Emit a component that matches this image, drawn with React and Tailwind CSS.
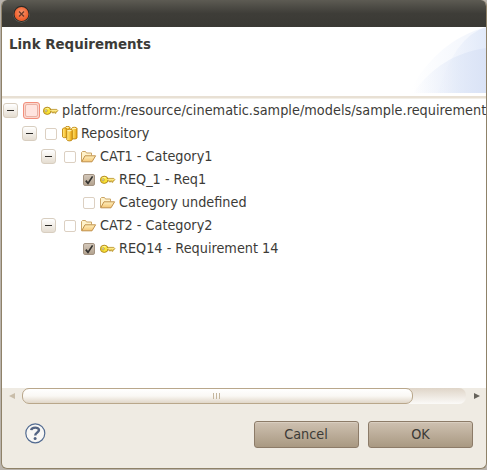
import React from "react";

function Key() {
  return (
    <svg width="16" height="12" viewBox="0 0 16 12" className="block shrink-0">
      <path d="M6.5 4.4H13.8L14.9 5.6L14 6.8H13V8.2H11.8V7H10.6V8H9.4V7H6.5Z" fill="#f9df6a" stroke="#b8912a" strokeWidth=".8" />
      <ellipse cx="4.2" cy="5.8" rx="3.8" ry="3.6" fill="#fae436" stroke="#b38a22" />
      <path d="M2 4.4Q3.7 2.9 6 3.9" fill="none" stroke="#fff8a8" />
      <circle cx="3" cy="5.9" r="1.1" fill="#fff" stroke="#8b6818" strokeWidth=".6" />
      <path d="M7 5.5H14" stroke="#fff0a0" strokeWidth=".6" />
    </svg>
  );
}

function Folder() {
  return (
    <svg width="16" height="14" viewBox="0 0 16 14" className="block shrink-0">
      <path d="M.5 11.5V2.5L1.5 1.5H4.5L5.5 3H10.5V5.5" fill="#fff2ca" stroke="#cba566" />
      <path d="M.7 11.8L4 5.8H14.6L11 11.8Z" fill="url(#folderFill)" stroke="#c0904a" strokeLinejoin="round" />
      <defs>
        <linearGradient id="folderFill" x2="0" y2="1">
          <stop stopColor="#fff0be" />
          <stop offset="1" stopColor="#f4c574" />
        </linearGradient>
      </defs>
    </svg>
  );
}

function Cylinders() {
  return (
    <svg width="16" height="16" viewBox="0 0 16 16" className="block shrink-0">
      <defs>
        <linearGradient id="gold">
          <stop stopColor="#ffe98a" />
          <stop offset=".45" stopColor="#fbd04a" />
          <stop offset="1" stopColor="#e39c10" />
        </linearGradient>
      </defs>
      <g fill="url(#gold)" stroke="#bd860f" strokeWidth=".9">
        <path d="M3.2 1.5V9H8V1.5C8 .1 3.2 .1 3.2 1.5Z" />
        <path d="M.5 3V10.8C.5 12 5 12 5 10.8V3C5 1.6 .5 1.6 .5 3Z" />
        <path d="M9.6 2.4V12C9.6 13.3 15 13.3 15 12V2.4C15 .9 9.6 .9 9.6 2.4Z" />
        <path d="M4.7 4.6V13.6C4.7 15.3 10.3 15.3 10.3 13.6V4.6C10.3 3 4.7 3 4.7 4.6Z" />
      </g>
      <g fill="#fff0ae">
        <ellipse cx="7.5" cy="4.6" rx="2.3" ry=".8" />
        <ellipse cx="12.3" cy="2.4" rx="2.1" ry=".7" />
        <ellipse cx="5.6" cy="1.5" rx="1.9" ry=".5" />
      </g>
    </svg>
  );
}

function Expander() {
  return (
    <div className="flex h-[15px] w-[15px] shrink-0 items-center justify-center rounded-[3px] border border-[#d8cec0] bg-gradient-to-b from-white to-[#e5ddd1]">
      <div className="h-px w-[7px] bg-[#2d2b28]" />
    </div>
  );
}

function Box({ checked, focus }) {
  if (focus)
    return (
      <div className="-mr-[2px] -ml-px flex h-[17px] w-[17px] shrink-0 items-center justify-center rounded-[3px] border border-[#f28f7c] bg-[#fcd6cd]">
        <div className="h-[13px] w-[13px] rounded-[2px] border border-[#e8b3a6] bg-[#ffe4df]" />
      </div>
    );
  return checked ? (
    <div className="ml-[2px] h-3 w-3 shrink-0 rounded-[2px] border border-[#a39382] bg-gradient-to-b from-[#d3c7b9] to-[#b3a390]">
      <svg width="12" height="12" viewBox="0 0 12 12" className="-mt-px -ml-px block">
        <path d="M2.8 6.6L5 9.4L9.6 2.4" fill="none" stroke="#33322f" strokeWidth="1.7" />
      </svg>
    </div>
  ) : (
    <div className="ml-[2px] h-3 w-3 shrink-0 rounded-[2px] border border-[#dcd0c2] bg-white" />
  );
}

const rows = [
  { pad: "pl-[1px] tracking-[0.03px]", icon: <Key />, text: "platform:/resource/cinematic.sample/models/sample.requirement", open: true, focus: true },
  { pad: "pl-[20px]", icon: <Cylinders />, text: "Repository", open: true },
  { pad: "pl-[39px]", icon: <Folder />, text: "CAT1 - Category1", open: true },
  { pad: "pl-[58px]", icon: <Key />, text: "REQ_1 - Req1", checked: true },
  { pad: "pl-[58px]", icon: <Folder />, text: "Category undefined" },
  { pad: "pl-[39px]", icon: <Folder />, text: "CAT2 - Category2", open: true },
  { pad: "pl-[58px]", icon: <Key />, text: "REQ14 - Requirement 14", checked: true },
];

function Button({ children, className }) {
  return (
    <button className={"h-[27px] rounded-[3px] border border-[#8c7b68] bg-gradient-to-b from-[#cec1b1] to-[#a99982] text-center leading-[25px] shadow-[inset_0_1px_0_#d9cec0] " + className}>
      {children}
    </button>
  );
}

export default function App() {
  return (
    <div className="h-[470px] w-[487px] overflow-hidden bg-[#b9b3ac] pl-px font-['DejaVu_Sans_Condensed','DejaVu_Sans',sans-serif] text-[14.3px] text-[#3c3b37] [font-stretch:condensed]">
      <div className="flex h-[469px] w-[486px] flex-col overflow-hidden rounded-[6px] border-x border-b border-[#8f8269] bg-[#efebe3]">
        <div className="flex h-[27px] shrink-0 items-center bg-gradient-to-b from-[#5d5b53] via-[#3e3d38] to-[#3a3934] pl-[11px]">
          <svg width="17" height="18" viewBox="0 0 17 18" className="mt-px block">
            <defs>
              <radialGradient id="closeFill" cy=".4">
                <stop stopColor="#fa9871" />
                <stop offset="1" stopColor="#ef602d" />
              </radialGradient>
            </defs>
            <circle cx="8.5" cy="9.2" r="8.3" fill="#77746b" />
            <circle cx="8.5" cy="8.8" r="8.1" fill="#2b2a27" />
            <circle cx="8.5" cy="9" r="7" fill="url(#closeFill)" />
            <path d="M6 6.5L11 11.5M11 6.5L6 11.5" stroke="#6d3b29" strokeWidth="1.4" />
          </svg>
        </div>
        <div className="flex h-[69px] shrink-0 justify-between bg-white pl-[7px]">
          <h1 className="mt-[10px] font-['DejaVu_Sans',sans-serif] text-[13.4px] leading-4 font-bold whitespace-nowrap [font-stretch:normal]">Link Requirements</h1>
          <svg width="74" height="66" viewBox="0 0 74 66" className="block">
            <defs>
              <linearGradient id="arc" gradientUnits="userSpaceOnUse" x1="0" x2="74" y1="0" y2="0">
                <stop stopColor="#fff" />
                <stop offset="1" stopColor="#f0f4fc" />
              </linearGradient>
              <linearGradient id="arcInner" gradientUnits="userSpaceOnUse" x1="0" x2="74" y1="0" y2="0">
                <stop stopColor="#e4ebf9" stopOpacity="0" />
                <stop offset="1" stopColor="#dae3f6" />
              </linearGradient>
              <linearGradient id="arcMid" gradientUnits="userSpaceOnUse" x1="32" x2="74" y1="0" y2="0">
                <stop stopColor="#e6edfa" stopOpacity="0.1" />
                <stop offset="1" stopColor="#e2eaf9" />
              </linearGradient>
            </defs>
            <path d="M-4 66C14 34 38 10 74 0V66Z" fill="url(#arc)" />
            <path d="M26 66Q42 10 74 0V66Z" fill="url(#arcMid)" />
            <path d="M1 66C20 40 42 26 74 21V66Z" fill="url(#arcInner)" />
          </svg>
        </div>
        <div className="h-[3px] shrink-0 border-b border-[#f3efe7] bg-[#e8e0d4]" />
        <div className="h-[289px] shrink-0 overflow-hidden bg-white">
          {rows.map((r) => (
            <div key={r.text} className={"flex h-[23px] items-center whitespace-nowrap " + r.pad}>
              {r.open ? <Expander /> : <div className="w-[15px] shrink-0" />}
              <div className="ml-[6px] flex w-[14px] shrink-0"><Box checked={r.checked} focus={r.focus} /></div>
              <div className="ml-[5px] flex shrink-0">{r.icon}</div>
              <span className="ml-[3px]">{r.text}</span>
            </div>
          ))}
        </div>
        <div className="flex h-4 shrink-0 items-center pl-[7px]">
          <svg width="6" height="6" className="block"><path d="M6 0V6L0 3Z" fill="#c9bda9" /></svg>
          <div className="ml-[7px] h-4 w-[444px] rounded-[7px] bg-gradient-to-b from-[#dfd5c8] to-[#fbfaf8]">
            <div className="flex h-4 w-[391px] items-center justify-center gap-[2px] rounded-[7px] border border-[#b9a78b] bg-gradient-to-b from-white via-[#faf8f4] to-[#e1d7c9] pr-[2px]">
              <i className="h-[6px] w-px bg-[#c4b69d]" />
              <i className="h-[6px] w-px bg-[#c4b69d]" />
              <i className="h-[6px] w-px bg-[#c4b69d]" />
            </div>
          </div>
          <svg width="6" height="6" className="ml-2 block"><path d="M0 0V6L6 3Z" fill="#66635b" /></svg>
        </div>
        <div className="flex pt-[17px] pl-[23px]">
          <svg width="21" height="21" viewBox="0 0 21 21" className="mt-[2px] block">
            <circle cx="10.3" cy="10.3" r="9.5" fill="#f8f7f5" stroke="#526b91" strokeWidth="1.2" />
            <path d="M6.2 7.2C6.6 3.8 14 3.7 14 7.1C14 9.6 10.2 9.3 10.2 12.5" fill="none" stroke="#536483" strokeWidth="2.4" />
            <circle cx="10.1" cy="15.5" r="1.5" fill="#536483" />
          </svg>
          <Button className="ml-[208px] w-[105px] pr-px">Cancel</Button>
          <Button className="ml-[9px] w-[105px]">OK</Button>
        </div>
      </div>
    </div>
  );
}
